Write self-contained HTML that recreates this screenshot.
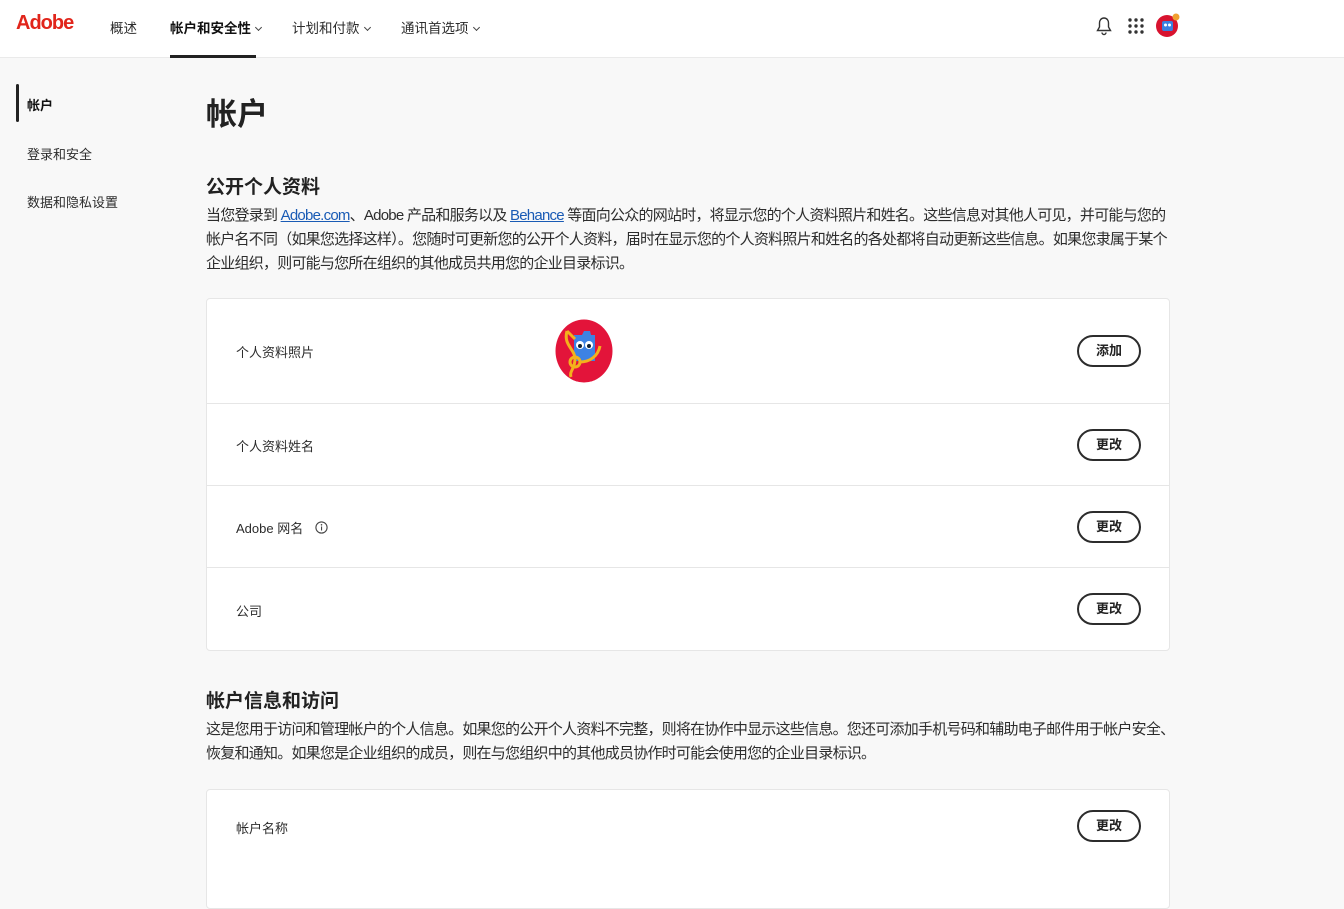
<!DOCTYPE html>
<html><head><meta charset="utf-8"><style>
*{box-sizing:border-box;margin:0;padding:0}
body{width:1344px;height:868px;overflow:hidden;background:#f8f8f8;font-family:"Liberation Sans","Noto Sans CJK SC",sans-serif;color:#222}
.hdr{position:absolute;left:0;top:0;width:1344px;height:58px;background:#fff;border-bottom:1px solid #eaeaea}
.logo{position:absolute;left:16px;top:12px;font-size:20px;font-weight:bold;color:#e1251b;letter-spacing:-1px}
.nav{position:absolute;top:17px;font-size:13.5px;color:#2c2c2c}
.nav.b{font-weight:bold;color:#111}
.chev{display:inline-block;width:5px;height:5px;border-right:1px solid #444;border-bottom:1px solid #444;transform:rotate(45deg);margin-left:5px;position:relative;top:-3px}
.ul{position:absolute;left:170px;top:55px;width:86px;height:3px;background:#222}
.side{position:absolute;left:27px;font-size:13px;color:#2c2c2c}
.bar{position:absolute;left:16px;top:84px;width:3px;height:38px;background:#222;border-radius:2px}
h1{position:absolute;left:206px;top:89px;font-size:31px;font-weight:bold;color:#222}
h2{position:absolute;left:206px;font-size:19px;font-weight:bold;color:#222}
p.t{position:absolute;left:206px;white-space:nowrap;font-size:15px;letter-spacing:-0.76px;line-height:24px;color:#2c2c2c}
p.t a{color:#1a5bb5;text-decoration:underline}
.card{position:absolute;left:206px;width:964px;background:#fff;border:1px solid #e6e6e6;border-radius:4px}
.row{position:relative;border-bottom:1px solid #e6e6e6}
.row:last-child{border-bottom:none}
.lbl{position:absolute;left:29px;font-size:13px;color:#2c2c2c}
.btn{position:absolute;left:870px;width:64px;height:32px;border:2px solid #2c2c2c;border-radius:16px;font-size:13px;font-weight:bold;text-align:center;line-height:28px;color:#222}
</style></head><body>
<div class="hdr">
<div class="logo">Adobe</div>
<div class="nav" style="left:110px">概述</div>
<div class="nav b" style="left:170px">帐户和安全性<span class="chev"></span></div>
<div class="nav" style="left:292px">计划和付款<span class="chev"></span></div>
<div class="nav" style="left:401px">通讯首选项<span class="chev"></span></div>
<div class="ul"></div>
<svg style="position:absolute;left:1095px;top:16px" width="18" height="20" viewBox="0 0 18 20"><path d="M9 2C6 2 4.5 4.5 4.5 7v4L2.5 14.5h13L13.5 11V7C13.5 4.5 12 2 9 2Z" fill="none" stroke="#333" stroke-width="1.4"/><path d="M7 16.5a2 2 0 004 0" fill="none" stroke="#333" stroke-width="1.4"/></svg>
<svg style="position:absolute;left:1128px;top:18px" width="16" height="16"><g fill="#333"><circle cx="2" cy="2" r="1.7"/><circle cx="8" cy="2" r="1.7"/><circle cx="14" cy="2" r="1.7"/><circle cx="2" cy="8" r="1.7"/><circle cx="8" cy="8" r="1.7"/><circle cx="14" cy="8" r="1.7"/><circle cx="2" cy="14" r="1.7"/><circle cx="8" cy="14" r="1.7"/><circle cx="14" cy="14" r="1.7"/></g></svg>
<svg style="position:absolute;left:1156px;top:13px" width="26" height="26"><circle cx="11" cy="13" r="11" fill="#d8132f"/><rect x="6" y="8" width="11" height="10" rx="2" fill="#3a7fe0"/><circle cx="9.5" cy="12" r="1.5" fill="#fff"/><circle cx="13.5" cy="12" r="1.5" fill="#fff"/><circle cx="20" cy="4" r="3.5" fill="#f0a030"/></svg>
</div>
<div class="bar"></div>
<div class="side" style="top:95px;font-weight:bold;color:#111">帐户</div>
<div class="side" style="top:144px">登录和安全</div>
<div class="side" style="top:192px">数据和隐私设置</div>
<h1>帐户</h1>
<h2 style="top:172px">公开个人资料</h2>
<p class="t" style="top:204px">当您登录到 <a>Adobe.com</a>、Adobe 产品和服务以及 <a>Behance</a> 等面向公众的网站时，将显示您的个人资料照片和姓名。这些信息对其他人可见，并可能与您的<br>帐户名不同（如果您选择这样）。您随时可更新您的公开个人资料，届时在显示您的个人资料照片和姓名的各处都将自动更新这些信息。如果您隶属于某个<br>企业组织，则可能与您所在组织的其他成员共用您的企业目录标识。</p>
<div class="card" style="top:298px;height:353px">
<div class="row" style="height:105px"><div class="lbl" style="top:43px">个人资料照片</div>
<svg style="position:absolute;left:348px;top:20px" width="58" height="64" viewBox="0 0 58 64"><ellipse cx="29" cy="32" rx="28.5" ry="31.5" fill="#e3143a"/><path d="M19 16h8l2-4h6l1 4h4v26H19z" fill="#3d82e3"/><circle cx="25" cy="26" r="4" fill="#fff"/><circle cx="34" cy="26" r="4" fill="#fff"/><circle cx="25" cy="27" r="2" fill="#123"/><circle cx="34" cy="27" r="2" fill="#123"/><path d="M12 12l8 8M12 12c-4 14 8 18 8 28s-6 12-4 18" stroke="#f3b21c" stroke-width="3" fill="none"/><circle cx="20" cy="43" r="5" fill="none" stroke="#f3b21c" stroke-width="3"/><path d="M25 43c10 0 18-6 20-16" stroke="#f3b21c" stroke-width="3" fill="none"/></svg>
<div class="btn" style="top:36px">添加</div></div>
<div class="row" style="height:82px"><div class="lbl" style="top:32px">个人资料姓名</div><div class="btn" style="top:25px">更改</div></div>
<div class="row" style="height:82px"><div class="lbl" style="top:32px">Adobe 网名 <svg style="margin-left:8px;vertical-align:-1px" width="13" height="13"><circle cx="6.5" cy="6.5" r="5.6" fill="none" stroke="#444" stroke-width="1.1"/><rect x="6" y="5.5" width="1.1" height="4" fill="#444"/><circle cx="6.5" cy="3.8" r=".8" fill="#444"/></svg></div><div class="btn" style="top:25px">更改</div></div>
<div class="row" style="height:82px"><div class="lbl" style="top:33px">公司</div><div class="btn" style="top:25px">更改</div></div>
</div>
<h2 style="top:686px">帐户信息和访问</h2>
<p class="t" style="top:718px">这是您用于访问和管理帐户的个人信息。如果您的公开个人资料不完整，则将在协作中显示这些信息。您还可添加手机号码和辅助电子邮件用于帐户安全、<br>恢复和通知。如果您是企业组织的成员，则在与您组织中的其他成员协作时可能会使用您的企业目录标识。</p>
<div class="card" style="top:789px;height:120px">
<div class="row" style="height:73px"><div class="lbl" style="top:28px">帐户名称</div><div class="btn" style="top:20px">更改</div></div>
</div>
</body></html>
